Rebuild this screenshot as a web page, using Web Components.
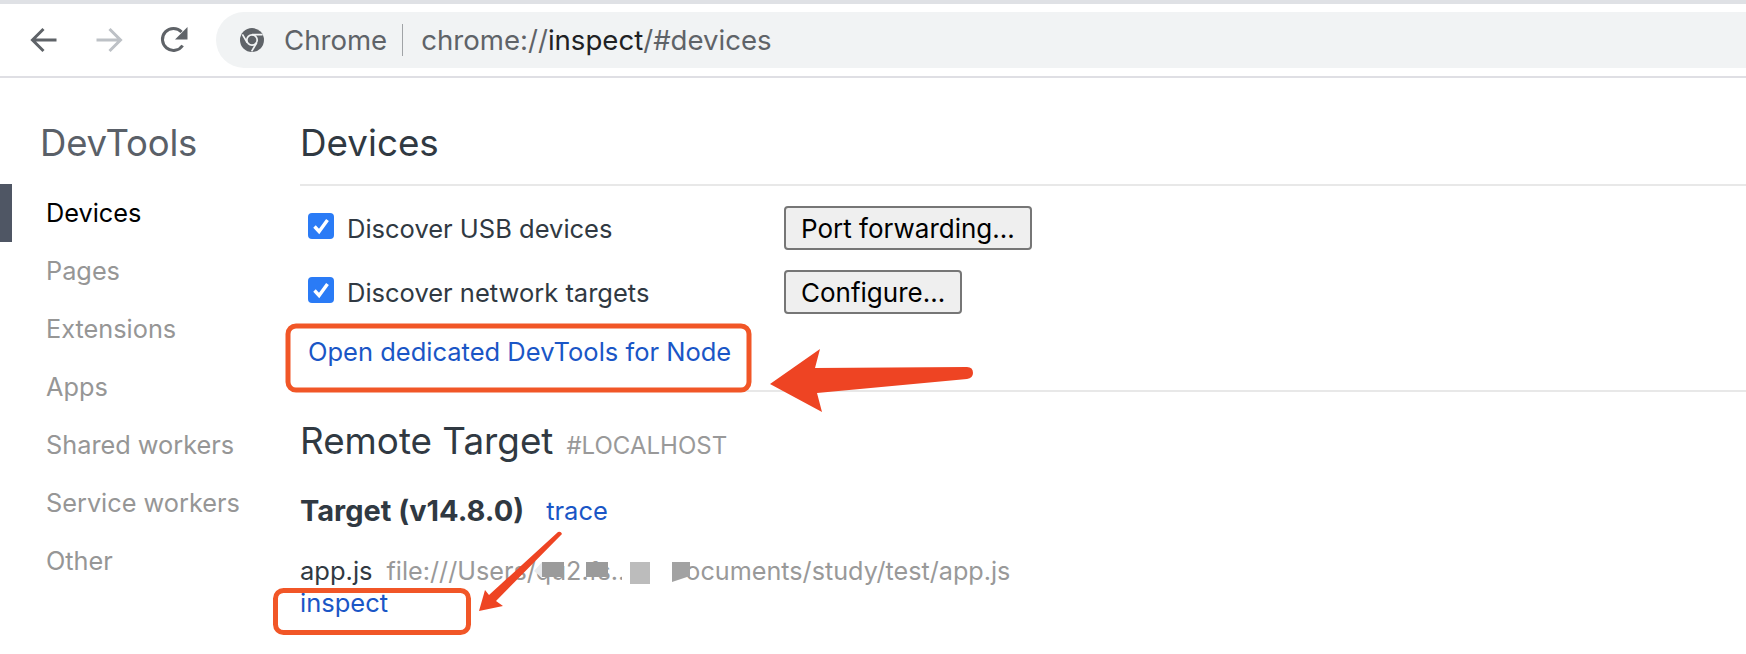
<!DOCTYPE html>
<html>
<head>
<meta charset="utf-8">
<title>Inspect with Chrome Developer Tools</title>
<style>
  html, body { margin: 0; height: 100%; background: #fff; overflow: hidden; }
  body { font-family: Inter, "Liberation Sans", sans-serif; position: relative; }
</style>
</head>
<body>
<browser-bar url-scheme="chrome://" url-host="inspect" url-rest="/#devices"></browser-bar>
<inspect-page>
  <side-nav slot="nav"></side-nav>
  <devices-panel></devices-panel>
</inspect-page>
<red-marks></red-marks>

<script type="module">
    // toolbar with the address field
    class BrowserBar extends HTMLElement {
        constructor() {
            super();
            this.attachShadow({mode: 'open'});
            this.shadowRoot.innerHTML = `
      <style>
        :host { display: block; border-top: 4px solid #dfe1e5; border-bottom: 2px solid #dfdfe4; background: #fff; height: 72px; box-sizing: content-box; }
        .bar { display: flex; align-items: center; height: 72px; padding-left: 30px; }
        svg { display: block; flex: none; }
        .back { margin-right: 37px; }
        .fwd { margin-right: 37px; }
        .reload { margin-right: 28px; }
        .omni { flex: 1; height: 56px; margin-top: 0; background: #f1f3f4; border-radius: 28px 0 0 28px; display: flex; align-items: center; padding-left: 24px; font-size: 27.6px; color: #5f6368; white-space: nowrap; }
        .name { margin-left: 20px; }
        .sep { width: 1px; height: 32px; background: #a0a3a6; margin: 0 18px 0 15px; }
        b { font-weight: 400; color: #202124; }
      </style>
      <div class="bar">
        <svg class="back" width="28" height="26" viewBox="0 0 28 26"><path d="M26.5 13H3M13.5 2 2.5 13l11 11" fill="none" stroke="#5f6368" stroke-width="3"/></svg>
        <svg class="fwd" width="28" height="26" viewBox="0 0 28 26"><path d="M1.5 13H25M14.5 2l11 11-11 11" fill="none" stroke="#bdc1c6" stroke-width="3"/></svg>
        <svg class="reload" width="28" height="28" viewBox="0 0 28 28"><path d="M22.6 19.5A11 11 0 1 1 21.6 6" fill="none" stroke="#5f6368" stroke-width="3"/><path d="M27.5 1v12.5H15z" fill="#5f6368"/></svg>
        <div class="omni">
          <svg width="24" height="24" viewBox="0 0 24 24">
            <circle cx="12" cy="12" r="12" fill="#5f6368"/>
            <circle cx="12" cy="12" r="5.2" fill="none" stroke="#f1f3f4" stroke-width="1.7"/>
            <path d="M12 6.6H22.6M7.3 14.7 2.4 6.4M16.7 14.8 11.6 23.4" fill="none" stroke="#f1f3f4" stroke-width="1.7"/>
          </svg>
          <span class="name">Chrome</span>
          <span class="sep"></span>
          <span>${this.getAttribute('url-scheme')}<b>${this.getAttribute('url-host')}</b>${this.getAttribute('url-rest')}</span>
        </div>
      </div>`;
        }
    }
    customElements.define('browser-bar', BrowserBar);

    // two columns below the toolbar
    class InspectPage extends HTMLElement {
        constructor() {
            super();
            this.attachShadow({mode: 'open'});
            this.shadowRoot.innerHTML = `
      <style>
        :host { display: grid; grid-template-columns: 300px 1fr; }
      </style>
      <slot name="nav"></slot>
      <slot></slot>`;
        }
    }
    customElements.define('inspect-page', InspectPage);

    class SideNav extends HTMLElement {
        constructor() {
            super();
            this.attachShadow({mode: 'open'});
            const items = ['Devices', 'Pages', 'Extensions', 'Apps', 'Shared workers', 'Service workers', 'Other'];
            this.shadowRoot.innerHTML = `
      <style>
        :host { display: block; padding-top: 41px; }
        h1 { font-size: 36.5px; line-height: 48px; font-weight: 400; color: #5a6068; margin: 0 0 17px 40px; letter-spacing: -0.2px; }
        a { display: block; height: 58px; line-height: 58px; padding-left: 46px; font-size: 25.3px; color: #969696; }
        a.on { color: #000; border-left: 12px solid #4f5664; padding-left: 34px; }
      </style>
      <h1>DevTools</h1>
      ${items.map((item, i) => `<a class="${i === 0 ? 'on' : ''}">${item}</a>`).join('')}`;
        }
    }
    customElements.define('side-nav', SideNav);

    class CheckRow extends HTMLElement {
        constructor() {
            super();
            this.attachShadow({mode: 'open'});
            this.shadowRoot.innerHTML = `
      <style>
        :host { display: grid; grid-template-columns: 476px auto; justify-content: start; align-items: center; height: 64px; padding-left: 8px; }
        label { display: flex; align-items: center; font-size: 25.5px; color: #303942; }
        svg { display: block; margin: -5px 13px 0 0; }
        button { font: inherit; font-size: 26px; color: #000; background: #efefef; border: 2px solid #767676; border-radius: 4px; height: 44px; padding: 0 15px; }
      </style>
      <label>
        <svg width="26" height="26" viewBox="0 0 26 26"><rect width="26" height="26" rx="4" fill="#2a7bf6"/><path d="M6.5 13.5l4.6 5L19.5 7" fill="none" stroke="#fff" stroke-width="3.4"/></svg>
        <span>${this.getAttribute('label')}</span>
      </label>
      <button>${this.getAttribute('action')}</button>`;
        }
    }
    customElements.define('check-row', CheckRow);

    class DevicesPanel extends HTMLElement {
        constructor() {
            super();
            this.attachShadow({mode: 'open'});
            this.shadowRoot.innerHTML = `
      <style>
        :host { display: block; padding-top: 41px; font-size: 25.5px; color: #303942; }
        h2 { font-size: 36.8px; line-height: 48px; font-weight: 400; margin: 0; }
        .head { height: 65px; border-bottom: 2px solid #e8e8e8; margin-bottom: 10px; }
        .rows { display: block; }
        a { color: #1a56c6; }
        .node { height: 66px; line-height: 56px; padding-left: 8px; border-bottom: 2px solid #e8e8e8; }
        .remote { display: flex; align-items: baseline; gap: 13px; margin-top: 25px; height: 48px; }
        .remote small { font-size: 24px; color: #999; }
        .target { margin-top: 28px; line-height: 36px; font-size: 29px; font-weight: 700; }
        .target a { font-size: 25.5px; font-weight: 400; margin-left: 22px; position: relative; top: -1px; }
        .app { margin-top: 23px; line-height: 36px; white-space: nowrap; }
        .app span { color: #999; margin-left: 14px; font-size: 25.2px; }
        .inspect { display: block; line-height: 26px; margin-top: 0.5px; }
        .hidden { display: inline-block; width: 60px; }
      </style>
      <div class="head"><h2>Devices</h2></div>
      <div class="rows">
        <check-row label="Discover USB devices" action="Port forwarding..."></check-row>
        <check-row label="Discover network targets" action="Configure..."></check-row>
      </div>
      <div class="node"><a>Open dedicated DevTools for Node</a></div>
      <div class="remote"><h2>Remote Target</h2><small>#LOCALHOST</small></div>
      <div class="target">Target (v14.8.0)<a>trace</a></div>
      <div class="app">app.js<span>file:///Users/qu2.fs..<i class="hidden"></i>ocuments/study/test/app.js</span></div>
      <a class="inspect">inspect</a>`;
        }
    }
    customElements.define('devices-panel', DevicesPanel);

    // hand drawn boxes, arrows and blur patches lying over the page
    class RedMarks extends HTMLElement {
        constructor() {
            super();
            this.attachShadow({mode: 'open'});
            this.shadowRoot.innerHTML = `
      <style>
        :host { display: block; position: absolute; left: 0; top: 0; pointer-events: none; }
        svg { display: block; }
      </style>
      <svg width="1746" height="654" viewBox="0 0 1746 654">
        <rect x="622" y="558" width="50" height="30" fill="#fff"/>
        <path d="M542 562 534 571 542 578z" fill="#e8eaed"/>
        <rect x="542" y="562" width="22" height="15" fill="#9b9b9b"/>
        <rect x="586" y="562" width="22" height="15" fill="#9b9b9b"/>
        <rect x="630" y="562" width="20" height="22" fill="#bcbcbc"/>
        <path d="M672 562h18v14l-18 6z" fill="#a2a2a2"/>
        <rect x="288" y="326" width="461" height="64" rx="8" fill="none" stroke="#f15627" stroke-width="5"/>
        <path d="M770 384 820 349 815 368 967 367Q973 367 973 373 973 378 967 379L817 393 822 412z" fill="#ee4423"/>
        <rect x="275.5" y="590.5" width="193" height="42" rx="8" fill="none" stroke="#f15627" stroke-width="5"/>
        <path d="M479 611 485 590 489 595 558 532Q561 531 562 534L496 601 503 606z" fill="#ee4423"/>
      </svg>`;
        }
    }
    customElements.define('red-marks', RedMarks);
</script>
</body>
</html>
